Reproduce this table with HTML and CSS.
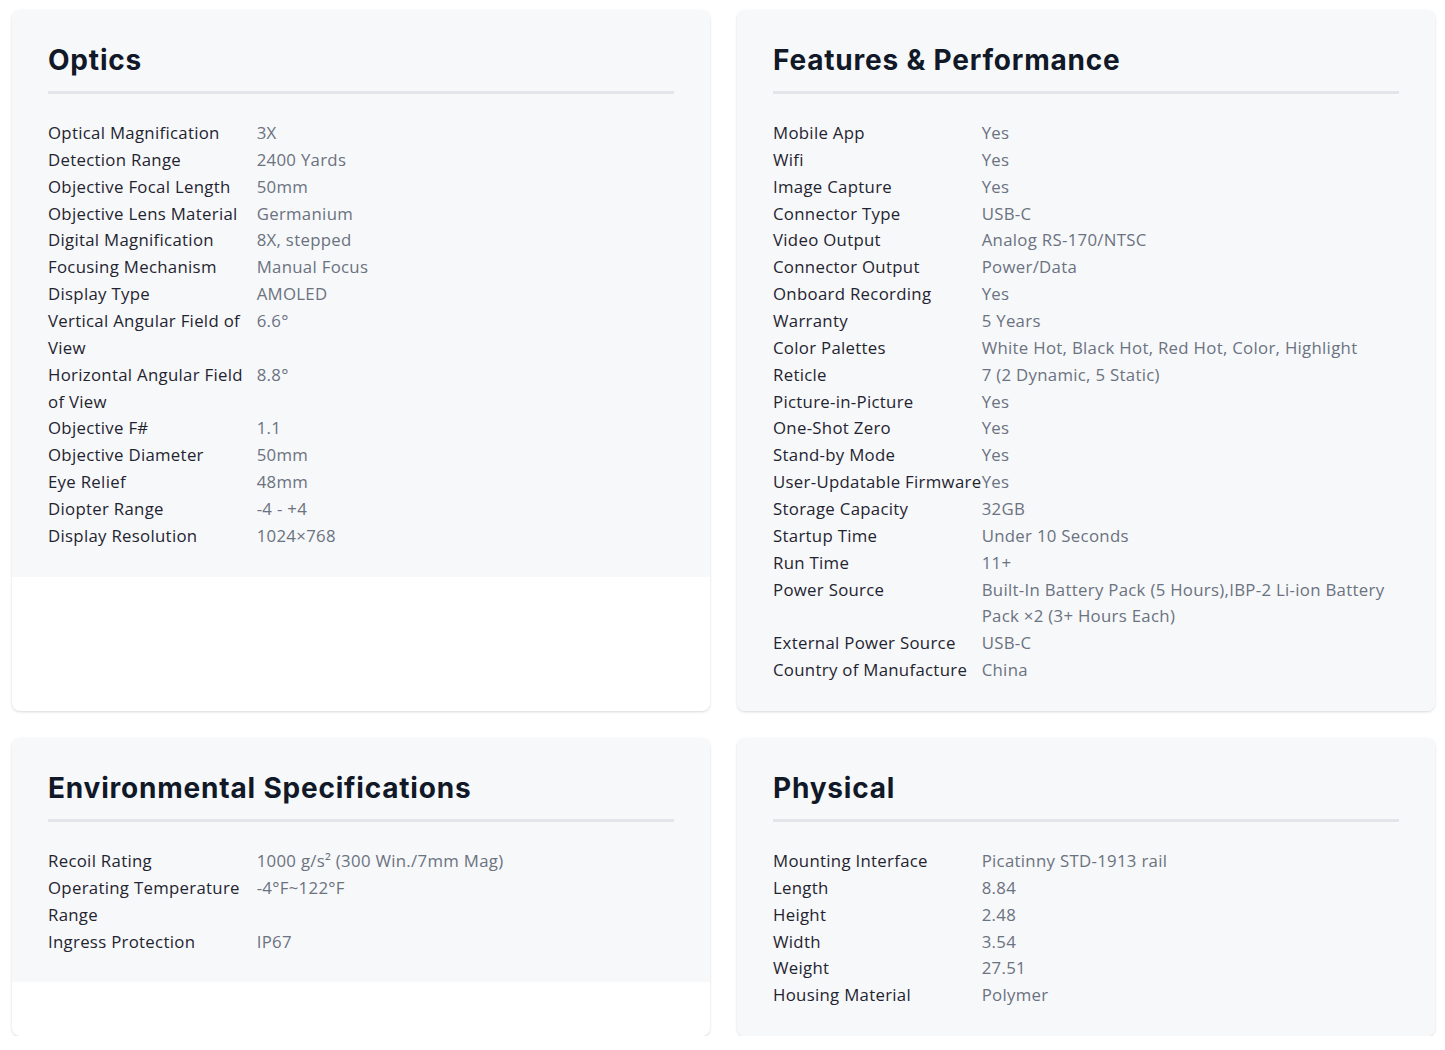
FILE: index.html
```html
<!DOCTYPE html>
<html>
<head>
<meta charset="utf-8">
<link rel="stylesheet" href="styles.css">
</head>
<body>
<div class="grid">
  <section class="card">
    <div class="panel">
      <h2 class="title">Optics</h2>
      <dl class="specs">
        <dt>Optical Magnification</dt><dd>3X</dd>
        <dt>Detection Range</dt><dd>2400 Yards</dd>
        <dt>Objective Focal Length</dt><dd>50mm</dd>
        <dt>Objective Lens Material</dt><dd>Germanium</dd>
        <dt>Digital Magnification</dt><dd>8X, stepped</dd>
        <dt>Focusing Mechanism</dt><dd>Manual Focus</dd>
        <dt>Display Type</dt><dd>AMOLED</dd>
        <dt>Vertical Angular Field of View</dt><dd>6.6°</dd>
        <dt>Horizontal Angular Field of View</dt><dd>8.8°</dd>
        <dt>Objective F#</dt><dd>1.1</dd>
        <dt>Objective Diameter</dt><dd>50mm</dd>
        <dt>Eye Relief</dt><dd>48mm</dd>
        <dt>Diopter Range</dt><dd>-4 - +4</dd>
        <dt>Display Resolution</dt><dd>1024×768</dd>
      </dl>
    </div>
  </section>
  <section class="card">
    <div class="panel">
      <h2 class="title">Features &amp; Performance</h2>
      <dl class="specs">
        <dt>Mobile App</dt><dd>Yes</dd>
        <dt>Wifi</dt><dd>Yes</dd>
        <dt>Image Capture</dt><dd>Yes</dd>
        <dt>Connector Type</dt><dd>USB-C</dd>
        <dt>Video Output</dt><dd>Analog RS-170/NTSC</dd>
        <dt>Connector Output</dt><dd>Power/Data</dd>
        <dt>Onboard Recording</dt><dd>Yes</dd>
        <dt>Warranty</dt><dd>5 Years</dd>
        <dt>Color Palettes</dt><dd>White Hot, Black Hot, Red Hot, Color, Highlight</dd>
        <dt>Reticle</dt><dd>7 (2 Dynamic, 5 Static)</dd>
        <dt>Picture-in-Picture</dt><dd>Yes</dd>
        <dt>One-Shot Zero</dt><dd>Yes</dd>
        <dt>Stand-by Mode</dt><dd>Yes</dd>
        <dt class="tight">User-Updatable Firmware</dt><dd>Yes</dd>
        <dt>Storage Capacity</dt><dd>32GB</dd>
        <dt>Startup Time</dt><dd>Under 10 Seconds</dd>
        <dt>Run Time</dt><dd>11+</dd>
        <dt>Power Source</dt><dd>Built-In Battery Pack (5 Hours),IBP-2 Li-ion Battery Pack ×2 (3+ Hours Each)</dd>
        <dt>External Power Source</dt><dd>USB-C</dd>
        <dt>Country of Manufacture</dt><dd>China</dd>
      </dl>
    </div>
  </section>
  <section class="card">
    <div class="panel">
      <h2 class="title">Environmental Specifications</h2>
      <dl class="specs">
        <dt>Recoil Rating</dt><dd>1000 g/s² (300 Win./7mm Mag)</dd>
        <dt>Operating Temperature Range</dt><dd>-4°F~122°F</dd>
        <dt>Ingress Protection</dt><dd>IP67</dd>
      </dl>
    </div>
  </section>
  <section class="card">
    <div class="panel">
      <h2 class="title">Physical</h2>
      <dl class="specs">
        <dt>Mounting Interface</dt><dd>Picatinny STD-1913 rail</dd>
        <dt>Length</dt><dd>8.84</dd>
        <dt>Height</dt><dd>2.48</dd>
        <dt>Width</dt><dd>3.54</dd>
        <dt>Weight</dt><dd>27.51</dd>
        <dt>Housing Material</dt><dd>Polymer</dd>
      </dl>
    </div>
  </section>
</div>
</body>
</html>
```

FILE: styles.css
```css
html, body {
  margin: 0;
  padding: 0;
  background: #ffffff;
}
body {
  font-family: "Open Sans", "Noto Sans", sans-serif;
}
.grid {
  display: grid;
  grid-template-columns: 698px 698px;
  column-gap: 27px;
  row-gap: 27px;
  padding: 10px 10px 0 12px;
}
.card {
  background: #ffffff;
  border-radius: 8px;
  box-shadow: 0 1px 3px rgba(0, 0, 0, 0.12), 0 1px 2px rgba(0, 0, 0, 0.04);
  overflow: hidden;
}
.panel {
  background: #f7f8fa;
  padding: 35px 36px 27px 36px;
}
.title {
  margin: 0;
  font-family: "Inter", sans-serif;
  font-weight: 700;
  font-size: 28px;
  line-height: 30px;
  color: #111827;
  padding-bottom: 16px;
  border-bottom: 3px solid #e2e5ea;
  letter-spacing: 0.8px;
}
.specs {
  margin: 26px 0 0 0;
  display: grid;
  grid-template-columns: 33.333% 1fr;
  font-size: 16.8px;
  line-height: 26.86px;
  letter-spacing: 0.3px;
}
.specs dt {
  color: #1f2430;
  margin: 0;
}
.specs dt.tight {
  white-space: nowrap;
}
.specs dd {
  color: #6b7280;
  margin: 0;
}
```
